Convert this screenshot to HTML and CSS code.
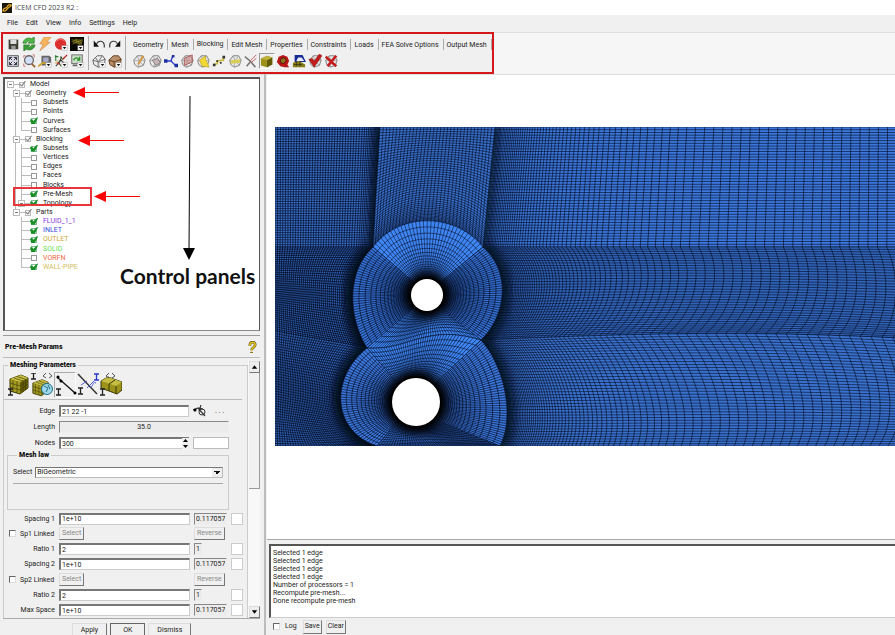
FILE: index.html
```html
<!DOCTYPE html>
<html lang="en">
<head>
<meta charset="utf-8">
<title>ICEM CFD 2023 R2</title>
<link rel="stylesheet" href="styles.css">
</head>
<body>
<svg class="defs" aria-hidden="true">
  <defs>
    <g id="mini"><rect x="9" y="10" width="6" height="5" fill="#fff" stroke="#999" stroke-width=".5"/><path d="M10 11.5h4l-2 2.5z" fill="#111"/></g>
    <g id="ball"><path d="M2 7l4-5 6 0 3 5-2 6-6 2-4-3z" fill="#e8e8e8" stroke="#777"/><path d="M2 7l6 1 7-1M6 2l2 6-1 7M12 2L8 8l5 5" fill="none" stroke="#999" stroke-width=".8"/></g>
    <g id="bar"><path d="M0 0h5M2.500 0v6M0 6h5" fill="none" stroke="currentColor" stroke-width="1.300"/></g>
    <g id="cube"><path d="M1 6l11-4 7 3v10l-8 6-10-3z" fill="#a39a20" stroke="#3b3706"/><path d="M11 9l8-4v10l-8 6z" fill="#655e09"/><path d="M1 6l11-4 7 3-8 4z" fill="#c5bc42"/><path d="M1 10l10 3 8-5M1 14l10 3 8-6M4 7v12M8 8v12M14 7.500v11M16.500 6v11M5 5l9 3M8 3.500l9 3" fill="none" stroke="#3b3706" stroke-width=".6"/></g>
  </defs>
</svg>
<div class="app">
  <header class="titlebar">
    <svg class="logo" viewBox="0 0 10 10"><rect width="10" height="10" fill="#1a1608"/><path d="M1 8c0-4 3-2 4-4s3-3 4-2-2 2-3 3-2 4-5 3z" fill="none" stroke="#e0a520" stroke-width="1.300"/></svg>
    <h1>ICEM CFD 2023 R2 :</h1>
  </header>
  <nav class="menubar">
    <button>File</button><button>Edit</button><button>View</button><button>Info</button><button>Settings</button><button>Help</button>
  </nav>
  <div class="toolbar">
    <div class="toolbox">
      <div class="icons five">
        <button aria-label="Save"><svg viewBox="0 0 16 16"><path d="M3 3h11v11H3z" fill="#3c3c30"/><path d="M5 3h7v5H5z" fill="#ddd"/><path d="M6 10h5v4H6z" fill="#999"/></svg></button>
        <button aria-label="Refresh"><svg viewBox="0 0 16 16"><path d="M1 7c1-5 6-7 10-5l3-2v7H7l2-2C7 4 6 5 5 7z" fill="#4fb948" stroke="#1d6d1c" stroke-width=".7"/><path d="M15 9c-1 5-6 7-10 5l-3 2V9h7l-2 2c2 1 3 0 4-2z" fill="#3c9d38" stroke="#1d6d1c" stroke-width=".7"/></svg></button>
        <button aria-label="Fast mode"><svg viewBox="0 0 16 16"><path d="M7 0h8l-5 6h4L2 16l4-8H2z" fill="#f7b45a" stroke="#c98a4d" stroke-width=".7"/></svg></button>
        <button aria-label="Stop"><svg viewBox="0 0 16 16"><circle cx="7.500" cy="8" r="6.500" fill="#db2f2f"/><path d="M3 5c2-3 7-3 9 0" stroke="#f18080" fill="none"/><use href="#mini"/></svg></button>
        <button aria-label="Display" class="full"><svg viewBox="0 0 16 16"><rect width="16" height="16" fill="#080805"/><path d="M1 5l6-3 8 1-2 6-8-2z" fill="#504a10"/><path d="M2 3l12 4M3 8l11-5M6 2l5 7" stroke="#898225" stroke-width=".8"/><use href="#mini"/></svg></button>
        <button aria-label="Fit"><svg viewBox="0 0 16 16"><rect x="2" y="2" width="12" height="12" fill="#dde" stroke="#444"/><path d="M4 4l3 3M12 4L9 7M4 12l3-3M12 12L9 9M4 7V4h3M12 7V4H9M4 9v3h3M12 9v3H9" fill="none" stroke="#222"/></svg></button>
        <button aria-label="Zoom"><svg viewBox="0 0 16 16"><path d="M2 4V2h2M12 1h2v3M2 11v3h2" fill="none" stroke="#c66"/><circle cx="8" cy="7" r="5" fill="#d4dff8" stroke="#666" stroke-width="1.500"/><path d="M11 11l4 4" stroke="#9a6231" stroke-width="2"/></svg></button>
        <button aria-label="Measure"><svg viewBox="0 0 16 16"><path d="M4 2h9l2 2v9H4z" fill="#666"/><rect x="6" y="4" width="6" height="5" fill="#aac"/><path d="M0 14l6-4 4 1" stroke="#c9a22b" stroke-width="2" fill="none"/><use href="#mini"/></svg></button>
        <button aria-label="Local axes"><svg viewBox="0 0 16 16"><path d="M2 1v7M1 3h4M7 3l3 3 4-4M5 9l3 5" stroke="#2c7c32" stroke-width="1.200" fill="none"/><path d="M2 14l6-7 5 5M9 3l-3 6" stroke="#333" stroke-width="1.200" fill="none"/><path d="M10 6l5-5M3 10l4 2" stroke="#c22" stroke-width="1.300"/><path d="M1 11l4-4" stroke="#c9a22b"/><use href="#mini"/></svg></button>
        <button aria-label="Layers"><svg viewBox="0 0 16 16"><rect x="2" y="1" width="12" height="10" fill="#c9dcc6" stroke="#666"/><path d="M4 7c2-4 5-3 7 0M11 3v4H8" fill="none" stroke="#2a9126" stroke-width="1.500"/><path d="M3 13h5" stroke="#666" stroke-width="2"/><use href="#mini"/></svg></button>
      </div>
      <div class="icons two">
        <button aria-label="Undo"><svg viewBox="0 0 16 16"><path d="M5 9c1-6 10-6 9 3" fill="none" stroke="#333" stroke-width="1.300"/><path d="M2 4v7h6z" fill="#111"/></svg></button>
        <button aria-label="Redo"><svg viewBox="0 0 16 16"><path d="M11 9C10 3 1 3 2 12" fill="none" stroke="#333" stroke-width="1.300"/><path d="M14 4v7H8z" fill="#111"/></svg></button>
        <button aria-label="Wireframe"><svg viewBox="0 0 16 16"><path d="M1 7l5-5 6 0 3 4-1 7-7 2-5-3z" fill="#eee" stroke="#555"/><path d="M1 7l6 2 8-3M7 9v6M7 9l5-7M7 9L4 4" fill="none" stroke="#666"/><use href="#mini"/></svg></button>
        <button aria-label="Solid"><svg viewBox="0 0 16 16"><path d="M1 7l5-5 6 0 3 4-1 7-7 2-5-3z" fill="#b98e68" stroke="#5b3918"/><path d="M1 7l6 2 8-3M7 9v6" fill="none" stroke="#5b3918"/><use href="#mini"/></svg></button>
      </div>
      <div class="tabs-area">
        <div class="tabs" role="tablist">
          <button role="tab">Geometry</button><button role="tab">Mesh</button><button role="tab" class="active" aria-selected="true">Blocking</button><button role="tab">Edit Mesh</button><button role="tab">Properties</button><button role="tab">Constraints</button><button role="tab">Loads</button><button role="tab">FEA Solve Options</button><button role="tab">Output Mesh</button>
        </div>
        <div class="tools">
          <button aria-label="Create block"><svg viewBox="0 0 16 16"><use href="#ball"/><path d="M13 2L7 12" stroke="#d9963a" stroke-width="2"/></svg></button>
          <button aria-label="Split block"><svg viewBox="0 0 16 16"><use href="#ball"/><path d="M5 7l6-2 3 5-5 3z" fill="#c8b4b4" stroke="#777"/></svg></button>
          <button aria-label="Merge vertices"><svg viewBox="0 0 16 16"><path d="M2 8h6l2-6M8 8l5 5" fill="none" stroke="#2838c8" stroke-width="1.500"/><path d="M0 6h4v4H0zM12 11h4v4h-4zM9 1h3v3H9z" fill="#2030a0"/></svg></button>
          <button aria-label="Edit block"><svg viewBox="0 0 16 16"><use href="#ball"/><path d="M5 5l9-4v8l-9 4z" fill="#c88" fill-opacity=".6" stroke="#a55"/></svg></button>
          <button aria-label="Associate"><svg viewBox="0 0 16 16"><use href="#ball"/><path d="M4 7l7-5v4l2 4 2 5-8-1z" fill="#f2d832" stroke="#a8921f" stroke-width=".6"/></svg></button>
          <button aria-label="Move vertex"><svg viewBox="0 0 16 16"><path d="M2 12l4-1 0-3 7-1 0-4" stroke="#c9bc3e" stroke-width="2" fill="none"/><path d="M1 11h3v3H1zM12 2h3v3h-3zM5 7h2v2H5zM9 9h2v2H9z" fill="#333"/></svg></button>
          <button aria-label="Transform"><svg viewBox="0 0 16 16"><use href="#ball"/><path d="M3 11l11-1V6L3 7z" fill="#d9cf58"/></svg></button>
          <button aria-label="Edit edge"><svg viewBox="0 0 16 16"><path d="M1 3l6 5 6 7M3 14l5-6" fill="none" stroke="#777" stroke-width="1.800"/><path d="M7 8l7-7M8 10l6-5" stroke="#b55"/></svg></button>
          <button aria-label="Pre-mesh params" class="pressed"><svg viewBox="0 0 16 16"><path d="M1 5l7-3 6 2v8l-6 3-7-2z" fill="#9d9218"/><path d="M8 7l6-3v8l-6 3z" fill="#625a08"/><path d="M1 5l7-3 6 2-6 3z" fill="#bdb23c"/></svg></button>
          <button aria-label="Quality"><svg viewBox="0 0 16 16"><path d="M3 3l5-2 5 2 2 5-2 4 2 3h-5l-5-1-4-5z" fill="#b91717"/><path d="M5 6l4-2 3 3-3 4-4-1z" fill="#8b751a" stroke="#5b0909"/></svg></button>
          <button aria-label="Smooth"><svg viewBox="0 0 16 16"><path d="M3 1h9l4 8H3z" fill="#192a94"/><path d="M7 4h4l3 4H5z" fill="#e9eefc"/><path d="M1 10l7-2 7 4v3H1z" fill="#877d14"/><path d="M2 12h10M5 9v5M9 9v5" stroke="#222" stroke-width=".7"/></svg></button>
          <button aria-label="Check blocks"><svg viewBox="0 0 16 16"><use href="#ball"/><path d="M1 6l4-1 2 3 6-8 3 2-9 13z" fill="#c21c1c" stroke="#7a0c0c" stroke-width=".5"/></svg></button>
          <button aria-label="Delete block"><svg viewBox="0 0 16 16"><use href="#ball"/><path d="M2 3l12 11M14 2L4 14" stroke="#c21c1c" stroke-width="3"/></svg></button>
        </div>
      </div>
    </div>
  </div>

  <main class="main">
    <section class="left">
      <div class="tree-panel">
        <ul class="tree">
          <li class="l0"><i class="exp"></i><label><input type="checkbox" class="part" checked>Model</label></li>
          <li class="l1"><i class="exp"></i><label><input type="checkbox" class="part" checked>Geometry</label></li>
          <li class="l2"><label><input type="checkbox">Subsets</label></li>
          <li class="l2"><label><input type="checkbox">Points</label></li>
          <li class="l2"><label><input type="checkbox" checked>Curves</label></li>
          <li class="l2 last"><label><input type="checkbox">Surfaces</label></li>
          <li class="l1"><i class="exp"></i><label><input type="checkbox" class="part" checked>Blocking</label></li>
          <li class="l2"><label><input type="checkbox" checked>Subsets</label></li>
          <li class="l2"><label><input type="checkbox">Vertices</label></li>
          <li class="l2"><label><input type="checkbox">Edges</label></li>
          <li class="l2"><label><input type="checkbox">Faces</label></li>
          <li class="l2"><label><input type="checkbox">Blocks</label></li>
          <li class="l2 marked"><label><input type="checkbox" checked>Pre-Mesh</label></li>
          <li class="l2 last"><i class="exp"></i><label><input type="checkbox" checked>Topology</label></li>
          <li class="l1 end"><i class="exp"></i><label><input type="checkbox" class="part" checked>Parts</label></li>
          <li class="l2 p fluid"><label><input type="checkbox" checked>FLUID_1_1</label></li>
          <li class="l2 p inlet"><label><input type="checkbox" checked>INLET</label></li>
          <li class="l2 p outlet"><label><input type="checkbox" checked>OUTLET</label></li>
          <li class="l2 p solid"><label><input type="checkbox" checked>SOLID</label></li>
          <li class="l2 p vorfn"><label><input type="checkbox">VORFN</label></li>
          <li class="l2 p last wall"><label><input type="checkbox" checked>WALL-PIPE</label></li>
        </ul>
        <svg class="arrows" viewBox="0 0 256 250">
          <g fill="#f00" stroke="#f00"><path d="M80 13.500h35M84 61.500h36M100 117.500h36"/><path d="M69 13.500l12-5.500v11zM74 61.500l12-5.500v11zM90 117.500l12-5.500v11z" stroke="none"/></g>
          <path d="M186 17L185 172" stroke="#000"/><path d="M179 169h12l-6 12z"/>
        </svg>
        <p class="note">Control panels</p>
      </div>

      <form class="params">
        <div class="params-head"><h2>Pre-Mesh Params</h2><svg viewBox="0 0 10 14"><path d="M2 5c0-5 6-5 6-1 0 3-4 3-4 6M4 12v1" fill="none" stroke="#55490a" stroke-width="3"/><path d="M2 5c0-5 6-5 6-1 0 3-4 3-4 6M4 11.500v1" fill="none" stroke="#e3c421" stroke-width="1.800"/></svg></div>
        <div class="params-body">
          <fieldset class="group">
            <legend>Meshing Parameters</legend>
            <div class="modes">
              <button type="button" aria-label="Update sizes"><svg viewBox="0 0 22 24"><use href="#cube" x="1"/><use href="#bar" y="16"/></svg></button>
              <button type="button" aria-label="Scale sizes"><svg viewBox="0 0 22 24"><use href="#cube" transform="translate(1 5) scale(.850)"/><use href="#bar"/><circle cx="16" cy="16" r="5.500" fill="#9ed8e8" stroke="#237088"/><path d="M13 13l4 2-2 4M17 12l2 4" stroke="#237088" fill="none"/><path d="M15 0l-3 3 3 2M18 0l3 3-3 2" fill="none" stroke="#555"/></svg></button>
              <button type="button" aria-label="Edge params" class="pressed"><svg viewBox="0 0 22 24"><path d="M2 4l18 16" stroke="#111" stroke-width="1.300"/><circle cx="3" cy="4" r="1.500"/><circle cx="6" cy="8" r="1.500"/><circle cx="20" cy="20" r="1.500"/><use href="#bar" x="1" y="16"/></svg></button>
              <button type="button" aria-label="Match edges"><svg viewBox="0 0 22 24"><path d="M1 1l19 20" stroke="#333" stroke-width="1.500"/><path d="M4 12l6-4M13 14c4 0 2-6 6-4M10 15l7-7" stroke="#5560d8" fill="none"/><use href="#bar" x="1" y="15"/><use href="#bar" x="17" y="1" color="#2838c8"/></svg></button>
              <button type="button" aria-label="Refinement"><svg viewBox="0 0 22 24"><path d="M1 8l7-4 14 5v8l-5 4L1 15z" fill="#9c921c" stroke="#3b3706"/><path d="M1 8l7-4 14 5-6 4z" fill="#c5bc42"/><path d="M9 11v7M16 13v8M9 11l6-4" stroke="#3b3706"/><path d="M9 0L6 3l3 2M12 0l3 3-3 2" fill="none" stroke="#555"/><use href="#bar" y="16"/></svg></button>
            </div>
            <div class="rows top">
              <label for="edge">Edge</label><input id="edge" class="field" value="21 22 -1"><span class="pick"><button type="button" aria-label="Pick edge"><svg viewBox="0 0 14 12"><path d="M0 5l5-2 7 8M5 3l5 1M8 0L6 6" fill="none" stroke="#333" stroke-width="1.200"/><circle cx="9" cy="7" r="3" fill="none" stroke="#333"/><circle cx="2" cy="5" r="1.500"/></svg></button><button type="button" class="dots">. . .</button></span>
              <label for="length">Length</label><input id="length" class="field read wide" value="35.0" readonly>
              <label for="nodes">Nodes</label><span class="spin"><input id="nodes" class="field" value="300"><button type="button" aria-label="Step"><svg viewBox="0 0 7 11"><path d="M1 4l2.500-3L6 4zM1 7l2.500 3L6 7z"/></svg></button></span><input class="field plain" aria-label="Nodes locked">
            </div>
            <fieldset class="law">
              <legend>Mesh law</legend>
              <div class="law-row"><label for="law">Select</label><select id="law"><option>BiGeometric</option></select></div>
            </fieldset>
            <div class="rows bottom">
              <label for="s1">Spacing 1</label><input id="s1" class="field" value="1e+10"><input class="field read" aria-label="Spacing 1 actual" value="0.117057" readonly><input class="box" type="checkbox" aria-label="Copy spacing 1">
              <label class="link"><input type="checkbox">Sp1 Linked</label><span><button type="button" class="raised">Select</button></span><span><button type="button" class="raised">Reverse</button></span><i></i>
              <label for="r1">Ratio 1</label><input id="r1" class="field" value="2"><input class="field read short" aria-label="Ratio 1 actual" value="1" readonly><input class="box" type="checkbox" aria-label="Copy ratio 1">
              <label for="s2">Spacing 2</label><input id="s2" class="field" value="1e+10"><input class="field read" aria-label="Spacing 2 actual" value="0.117057" readonly><input class="box" type="checkbox" aria-label="Copy spacing 2">
              <label class="link"><input type="checkbox">Sp2 Linked</label><span><button type="button" class="raised">Select</button></span><span><button type="button" class="raised">Reverse</button></span><i></i>
              <label for="r2">Ratio 2</label><input id="r2" class="field" value="2"><input class="field read short" aria-label="Ratio 2 actual" value="1" readonly><input class="box" type="checkbox" aria-label="Copy ratio 2">
              <label for="ms">Max Space</label><input id="ms" class="field" value="1e+10"><input class="field read" aria-label="Max space actual" value="0.117057" readonly><input class="box" type="checkbox" aria-label="Copy max space">
            </div>
          </fieldset>
          <div class="scroll"><button type="button" aria-label="Scroll up"><svg viewBox="0 0 10 10"><path d="M2 7l3-4 3 4z"/></svg></button><div class="thumb"></div><button type="button" aria-label="Scroll down"><svg viewBox="0 0 10 10"><path d="M2 3l3 4 3-4z"/></svg></button></div>
        </div>
        <div class="actions"><button type="button">Apply</button><button type="button" class="ok">OK</button><button type="button">Dismiss</button></div>
      </form>
    </section>

    <section class="right">
      <div class="viewport"><svg id="mesh" class="mesh" role="img" aria-label="Computational mesh"></svg></div>
      <div class="log" role="log">
        <p>Selected 1 edge</p><p>Selected 1 edge</p><p>Selected 1 edge</p><p>Selected 1 edge</p><p>Number of processors = 1</p><p>Recompute pre-mesh...</p><p>Done recompute pre-mesh</p>
      </div>
      <div class="log-actions"><label><input type="checkbox">Log</label><button>Save</button><button>Clear</button></div>
    </section>
  </main>
</div>
<script src="mesh.js"></script>
</body>
</html>
```
FILE: styles.css
```css
* { box-sizing: border-box; }
html, body { margin: 0; height: 100%; }
body { background: #fff; color: #222; font: 7px/9px Roboto, "Liberation Sans", sans-serif; }
h1, h2, p, ul, fieldset, legend { margin: 0; padding: 0; }
button, input, select { font: inherit; color: inherit; margin: 0; padding: 0; border: 0; background: none; border-radius: 0; min-width: 0; }
svg { display: block; }
.defs { position: absolute; width: 0; height: 0; }
.app { min-height: 100vh; display: flex; flex-direction: column; background: #f0f0f0; overflow: hidden; }

.titlebar { height: 15px; background: #fff; display: flex; align-items: center; gap: 3px; padding: 1px 2px 0; }
.logo { width: 10px; height: 10px; }
.titlebar h1 { font: 400 7px/10px "Open Sans", sans-serif; color: #444; }
.menubar { height: 16px; display: flex; align-items: center; gap: 8px; padding: 1px 0 0 7px; }

.toolbar { height: 43px; background: #f6f6f6; border-top: 1px solid #ddd; border-bottom: 1px solid #ddd; display: flex; padding-left: 1px; margin-top: 1px; margin-bottom: -1px; }
.toolbox { margin-top: -1px; height: 42px; border: 2px solid #d3191c; background: #f0f0f0; display: flex; align-items: flex-start; padding: 2px 0 0 2px; }
.icons { display: grid; grid-auto-rows: 17px; border-right: 1px solid #aaa; }
.icons.five { grid-template-columns: repeat(5, 16px); padding-right: 3px; }
.icons.two { grid-template-columns: repeat(2, 16px); padding: 0 2px; }
.icons svg, .tools svg { width: 14px; height: 14px; }
.icons button, .tools button { width: 16px; height: 16px; padding: 1px; }
.icons .full { padding: 0 1px; }
.tabs-area { padding-left: 5px; }
.tabs { display: flex; height: 17px; align-items: center; padding-left: 1px; }
.tabs button { height: 11px; padding: 0 4px 0 3px; border-right: 1px solid #aaa; line-height: 12px; }
.tabs button:first-child { padding-left: 1px; }
.tabs .active { padding-bottom: 1px; line-height: 10px; }
.tools { display: flex; }
.tools .pressed { border: 1px solid #999; border-right-color: #fff; border-bottom-color: #fff; padding: 0; }

.main { flex: 1; display: grid; grid-template-columns: 266px minmax(0, 1fr); }
.left { display: flex; flex-direction: column; padding: 3px 4px 0 3px; border-right: 2px solid #bbb; }
.tree-panel { flex: 1; position: relative; background: #fff; border: 2px solid #555; border-right-width: 1px; border-bottom: 1px solid #888; padding: 1px 2px 0; margin-bottom: 4px; }
.tree { list-style: none; height: 192px; display: grid; grid-auto-rows: 1fr; }
.tree li { display: flex; align-items: center; position: relative; }
.tree label { display: flex; align-items: center; gap: 5px; }
.l1 { padding-left: 6px; }
.l2 { padding-left: 22px; }
.l2:not(.p)::after, .l1::after { content: ""; position: absolute; left: 8px; top: 0; bottom: 0; border-left: 1px solid #bbb; z-index: 0; }
.l1.end::after { bottom: 50%; }
.l2::before { content: ""; position: absolute; left: 14px; top: 0; bottom: 0; border-left: 1px solid #bbb; }
.l2.last::before { bottom: 50%; }
.l2 label::before { content: ""; width: 10px; border-top: 1px solid #bbb; margin-left: -8px; margin-right: -5px; }
.exp { width: 7px; height: 7px; border: 1px solid #bbb; background: linear-gradient(#777, #777) center / 3px 1px no-repeat #fff; z-index: 1; }
.exp + label::before { content: ""; width: 5px; border-top: 1px solid #bbb; margin-right: -5px; }
.l2 .exp { margin-left: -11px; margin-right: 4px; }
.l2 .exp + label::before { width: 6px; margin-left: -4px; margin-right: -5px; }
.tree input { appearance: none; width: 6px; height: 6px; border: 1px solid #999; background: #fff; position: relative; }
.l2 input { margin-right: 1px; }
.tree input:checked { border-color: #8b9; }
.tree input:checked::after { content: ""; position: absolute; left: -2px; top: -2px; width: 8px; height: 7px; background: #189025; clip-path: polygon(0 35%, 30% 30%, 40% 55%, 90% 0, 100% 10%, 60% 100%, 15% 100%); }
.tree .part:checked { border-color: #bbb; }
.tree .part:checked::after { background: #888; clip-path: polygon(20% 40%, 45% 65%, 90% 0, 100% 10%, 50% 90%, 15% 55%); }
.fluid { color: #8a35e0; }
.inlet { color: #3346e0; }
.outlet { color: #cda832; }
.solid { color: #62e052; }
.vorfn { color: #f0683c; }
.wall { color: #d0bd60; }
.marked label::after { content: ""; position: absolute; left: 6px; top: -3px; width: 75px; height: 15px; border: 2px solid #e8373c; z-index: 2; }
.arrows { position: absolute; left: -1px; top: 0; width: 256px; height: 250px; pointer-events: none; }
.note { position: absolute; left: 115px; top: 184px; font: 700 21px/25px Lato, sans-serif; color: #111; white-space: nowrap; }

.params { border-top: 1px solid #999; }
.params-head { height: 22px; display: flex; justify-content: space-between; align-items: center; padding: 2px 3px 0 2px; border-bottom: 1px solid #bbb; }
.params-head h2, legend { font-size: 7px; font-weight: 900; line-height: 9px; color: #111; }
.params-head svg { width: 9px; height: 13px; }
.params-body { display: flex; padding-top: 3px; border-bottom: 1px solid #aaa; }
.group { flex: 1; min-width: 0; border: 1px solid #ccc; border-bottom: 0; }
.group > legend { margin-left: 4px; padding: 0 2px; }
.modes { display: flex; gap: 1px; padding: 2px 3px 1px 4px; border-bottom: 1px solid #bbb; margin: 0 5px 3px 0; }
.modes button { width: 22px; height: 26px; padding: 1px 0; }
.modes svg { width: 22px; height: 24px; }
.modes .pressed { border: 1px solid #aaa; border-right-color: #fff; border-bottom-color: #fff; padding: 0; }
.rows { display: grid; grid-template-columns: 51px minmax(0, 1fr) 33px 12px; column-gap: 4px; align-items: center; padding-right: 4px; }
.rows.top { grid-template-columns: 51px minmax(0, 1fr) 36px; grid-auto-rows: 16px; padding-right: 18px; }
.rows.bottom { height: 107px; grid-auto-rows: 1fr; }
.rows > label { text-align: right; white-space: nowrap; line-height: 10px; }
.field { width: 100%; height: 12px; background: #fff; border: 1px solid #ccc; border-top: 2px solid #777; border-left: 2px solid #777; padding: 0 1px; }
.field.read { background: #ececec; border-width: 1px; border-color: #888 #eee #eee #888; }
.field.wide { grid-column: 2 / 4; text-align: center; }
.field.short { width: 8px; }
.field.plain { border: 1px solid #bbb; }
.pick { display: flex; align-items: center; gap: 8px; }
.pick svg { width: 14px; height: 12px; }
.dots { line-height: 8px; white-space: nowrap; }
.spin { display: flex; position: relative; }
.spin button { position: absolute; right: 0; top: 1px; background: #eee; width: 7px; height: 11px; }
.spin svg { width: 7px; height: 11px; }
.law { border: 1px solid #ccc; margin: 0 18px 1px 3px; height: 59px; padding: 7px 5px 0; }
.law legend { margin-left: 4px; padding: 0 2px; }
.law-row { display: flex; align-items: center; gap: 3px; padding-bottom: 5px; border-bottom: 1px solid #aaa; }
select { flex: 1; height: 11px; appearance: none; border: 1px solid #bbb; border-top: 1px solid #777; border-left: 1px solid #777; padding-left: 1px; line-height: 9px; background: linear-gradient(45deg, transparent 50%, #111 50%) right 5px center / 3px 3px no-repeat, linear-gradient(-45deg, transparent 50%, #111 50%) right 2px center / 3px 3px no-repeat, linear-gradient(90deg, #fff, #fff) 0 0 / calc(100% - 10px) 100% no-repeat, #eee; }
.link { display: flex; align-items: center; gap: 4px; padding-left: 5px; }
.link input, .log-actions input { appearance: none; flex: none; width: 7px; height: 7px; background: #fff; border: 1px solid #ddd; border-top-color: #666; border-left-color: #666; }
.raised { height: 13px; padding: 0 2px; color: #888; border: 1px solid #ddd; border-right-color: #777; border-bottom-color: #777; display: block; }
.box { appearance: none; width: 12px; height: 12px; background: #fff; border: 1px solid #ccc; }
.scroll { width: 12px; display: flex; flex-direction: column; background: #f8f8f8; padding-left: 1px; }
.scroll button { height: 12px; background: #eee; border: 1px solid #ddd; border-right-color: #777; border-bottom-color: #777; }
.scroll svg { width: 9px; height: 10px; }
.scroll button:last-child { margin-top: auto; }
.thumb { height: 116px; background: #f0f0f0; border-right: 1px solid #999; border-bottom: 1px solid #999; }
.actions { display: flex; justify-content: center; height: 16px; padding-top: 4px; gap: 3px; overflow: hidden; }
.actions button { height: 14px; border: 1px solid #ddd; border-right: 1px solid #777; padding: 0 8px; line-height: 12px; }
.actions .ok { border: 1px solid #666; padding: 0 12px; }

.right { display: flex; flex-direction: column; min-width: 0; padding-left: 1px; margin-top: 1px; }
.viewport { flex: 1; background: #fff; padding: 52px 0 0 8px; border-bottom: 1px solid #aaa; }
.mesh { width: 100%; height: 319px; background: #2a5cb4; }
.log { margin: 4px 0 0 2px; height: 74px; background: #fff; border: 2px solid #555; border-right: 0; border-bottom: 1px solid #ccc; padding: 3px 2px; line-height: 8px; }
.log-actions { display: flex; align-items: center; gap: 4px; height: 17px; padding-left: 6px; }
.log-actions label { display: flex; align-items: center; gap: 5px; margin-right: 2px; }
.log-actions button { height: 14px; border: 1px solid #ddd; border-right-color: #777; border-bottom-color: #777; padding: 0 1px; }
```
FILE: mesh.js
```js
// Draws a structured multi-block mesh around two cylinders.
const NS = "http://www.w3.org/2000/svg";
const svg = document.getElementById("mesh");

function add(tag, attrs) {
  const el = document.createElementNS(NS, tag);
  for (const k in attrs) el.setAttribute(k, attrs[k]);
  svg.appendChild(el);
  return el;
}

// Bigeometric node distribution: first/last cell sizes relative to the largest.
function spread(n, first, last, grow) {
  const t = [0];
  for (let i = 0; i < n; i++) {
    t.push(t[i] + Math.min(1, first * grow ** i, last * grow ** (n - 1 - i)));
  }
  return t.map(v => v / t[n]);
}

const line = (a, b) => t => [a[0] + (b[0] - a[0]) * t, a[1] + (b[1] - a[1]) * t];
const bez = (a, b, c, d) => t => {
  const u = 1 - t;
  return [0, 1].map(k => u * u * u * a[k] + 3 * u * u * t * b[k] + 3 * u * t * t * c[k] + t * t * t * d[k]);
};
const arc = (cx, cy, r, from, to) => t => {
  const g = (from + (to - from) * t) * Math.PI / 180;
  return [cx + r * Math.cos(g), cy + r * Math.sin(g)];
};

const steps = [...Array(25).keys()].map(i => i / 24);
const back = [...steps].reverse();
const poly = pts => "M" + pts.map(q => q[0].toFixed(1) + " " + q[1].toFixed(1)).join("L");

// Transfinite patch; top and bottom run along u, left and right along v.
function block(top, bottom, left, right, us, vs, fill, ink) {
  const p = (u, v) => [0, 1].map(k =>
    (1 - v) * top(u)[k] + v * bottom(u)[k] + (1 - u) * left(v)[k] + u * right(v)[k]
    - (1 - u) * (1 - v) * top(0)[k] - u * (1 - v) * top(1)[k]
    - (1 - u) * v * bottom(0)[k] - u * v * bottom(1)[k]);
  add("path", { d: poly([...steps.map(u => p(u, 0)), ...steps.map(v => p(1, v)), ...back.map(u => p(u, 1)), ...back.map(v => p(0, v))]) + "Z", fill });
  const d = us.map(u => poly(steps.map(v => p(u, v)))).concat(vs.map(v => poly(steps.map(u => p(u, v))))).join("");
  add("path", { d, fill: "none", stroke: "#030a1c", "stroke-width": ink });
}

add("filter", { id: "soft", x: "-50%", y: "-50%", width: "200%", height: "200%" }).innerHTML = '<feGaussianBlur stdDeviation="4"/>';
const shade = (curve, width, opacity) =>
  add("path", { d: poly(steps.map(curve)), fill: "none", stroke: "#000814", "stroke-width": width, opacity, filter: "url(#soft)" });

const A = [98, 120], B = [208, 120], C = [92, 221], D = [206, 213];
const blue = "#3f86f5", mid = "#3b77dc", ring = "#3570d4", side = "#3a72d0", deep = "#3164bb";

const ringTop = bez(A, [124, 85], [180, 85], B);
const ringLeft = bez(A, [70, 146], [74, 192], C);
const ringRight = bez(B, [236, 144], [232, 188], D);
const waist = bez(C, [134, 224], [150, 196], D);
const lowLeft = bez(C, [55, 250], [56, 304], [102, 319]);
const lowRight = bez(D, [230, 240], [240, 290], [225, 319]);
const floor = line([102, 319], [225, 319]);

const W = Math.max(640, svg.clientWidth);
const even = n => spread(n, 1, 1, 1);
const leftX = spread(46, 1, .2, 1.12);
const rightX = spread(78, .12, 1, 1.04);
const westSplit = bez([0, 204], [30, 210], [60, 214], C);
const eastSplit = bez(D, [320, 208], [470, 202], [W, 212]);

// Outer blocks
block(line([0, 0], [105, 0]), line([0, 120], A), line([0, 0], [0, 120]), line([105, 0], A), leftX, even(50), side, .65);
block(line([220, 0], [W, 0]), line(B, [W, 120]), line([220, 0], B), line([W, 0], [W, 120]), rightX, even(44), mid, .6);
block(line([0, 120], A), westSplit, line([0, 120], [0, 204]), ringLeft, leftX, even(40), deep, .75);
block(line(B, [W, 120]), eastSplit, ringRight, bez([W, 120], [W + 14, 150], [W + 14, 190], [W, 212]), rightX, even(36), deep, .6);
block(westSplit, line([0, 319], [102, 319]), line([0, 204], [0, 319]), lowLeft, leftX, even(46), deep, .7);
block(eastSplit, line([225, 319], [W, 319]), lowRight, bez([W, 212], [W + 16, 250], [W + 22, 290], [W, 319]), rightX, even(40), side, .6);

// Cells thin out towards the column and the rings
for (const c of [line([105, 0], A), line([220, 0], B)]) shade(c, 9, .55);
for (const c of [ringLeft, ringRight, lowLeft, lowRight]) shade(c, 14, .75);

block(line([105, 0], [220, 0]), ringTop, line([105, 0], A), line([220, 0], B), even(34), spread(46, 1, .5, 1.05), side, .6);

// Upper ring
const angles = [[225, 315], [225, 135], [315, 405], [135, 45]];
const wall = spread(23, 1, .08, 1.13);
const [n1, w1, e1, s1] = angles.map(r => arc(152, 168, 16, ...r));
block(ringTop, n1, line(A, n1(0)), line(B, n1(1)), even(32), wall, blue, .55);
block(ringLeft, w1, line(A, w1(0)), line(C, w1(1)), even(42), wall, ring, .65);
block(ringRight, e1, line(B, e1(0)), line(D, e1(1)), even(42), wall, ring, .65);
block(waist, s1, line(C, s1(0)), line(D, s1(1)), even(42), spread(14, 1, .15, 1.15), blue, .6);

// Lower ring
const [n2, w2, e2, s2] = angles.map(r => arc(141, 275, 24, ...r));
block(waist, n2, line(C, n2(0)), line(D, n2(1)), even(42), spread(18, 1, .12, 1.15), blue, .6);
block(lowLeft, w2, line(C, w2(0)), line([102, 319], w2(1)), even(44), wall, mid, .65);
block(lowRight, e2, line(D, e2(0)), line([225, 319], e2(1)), even(44), wall, mid, .65);
block(floor, s2, line([102, 319], s2(0)), line([225, 319], s2(1)), even(44), spread(20, .5, .2, 1.1), mid, .65);
shade(line([95, 322], [185, 322]), 12, .9);

// Cylinders with their boundary layers
for (const [cx, cy, r] of [[152, 168, 16], [141, 275, 24]]) {
  add("circle", { cx, cy, r: r + 2, fill: "#000", stroke: "#000", "stroke-width": 8, filter: "url(#soft)" });
  add("circle", { cx, cy, r: r + 2, fill: "#000" });
  add("circle", { cx, cy, r, fill: "#fff" });
}
```
